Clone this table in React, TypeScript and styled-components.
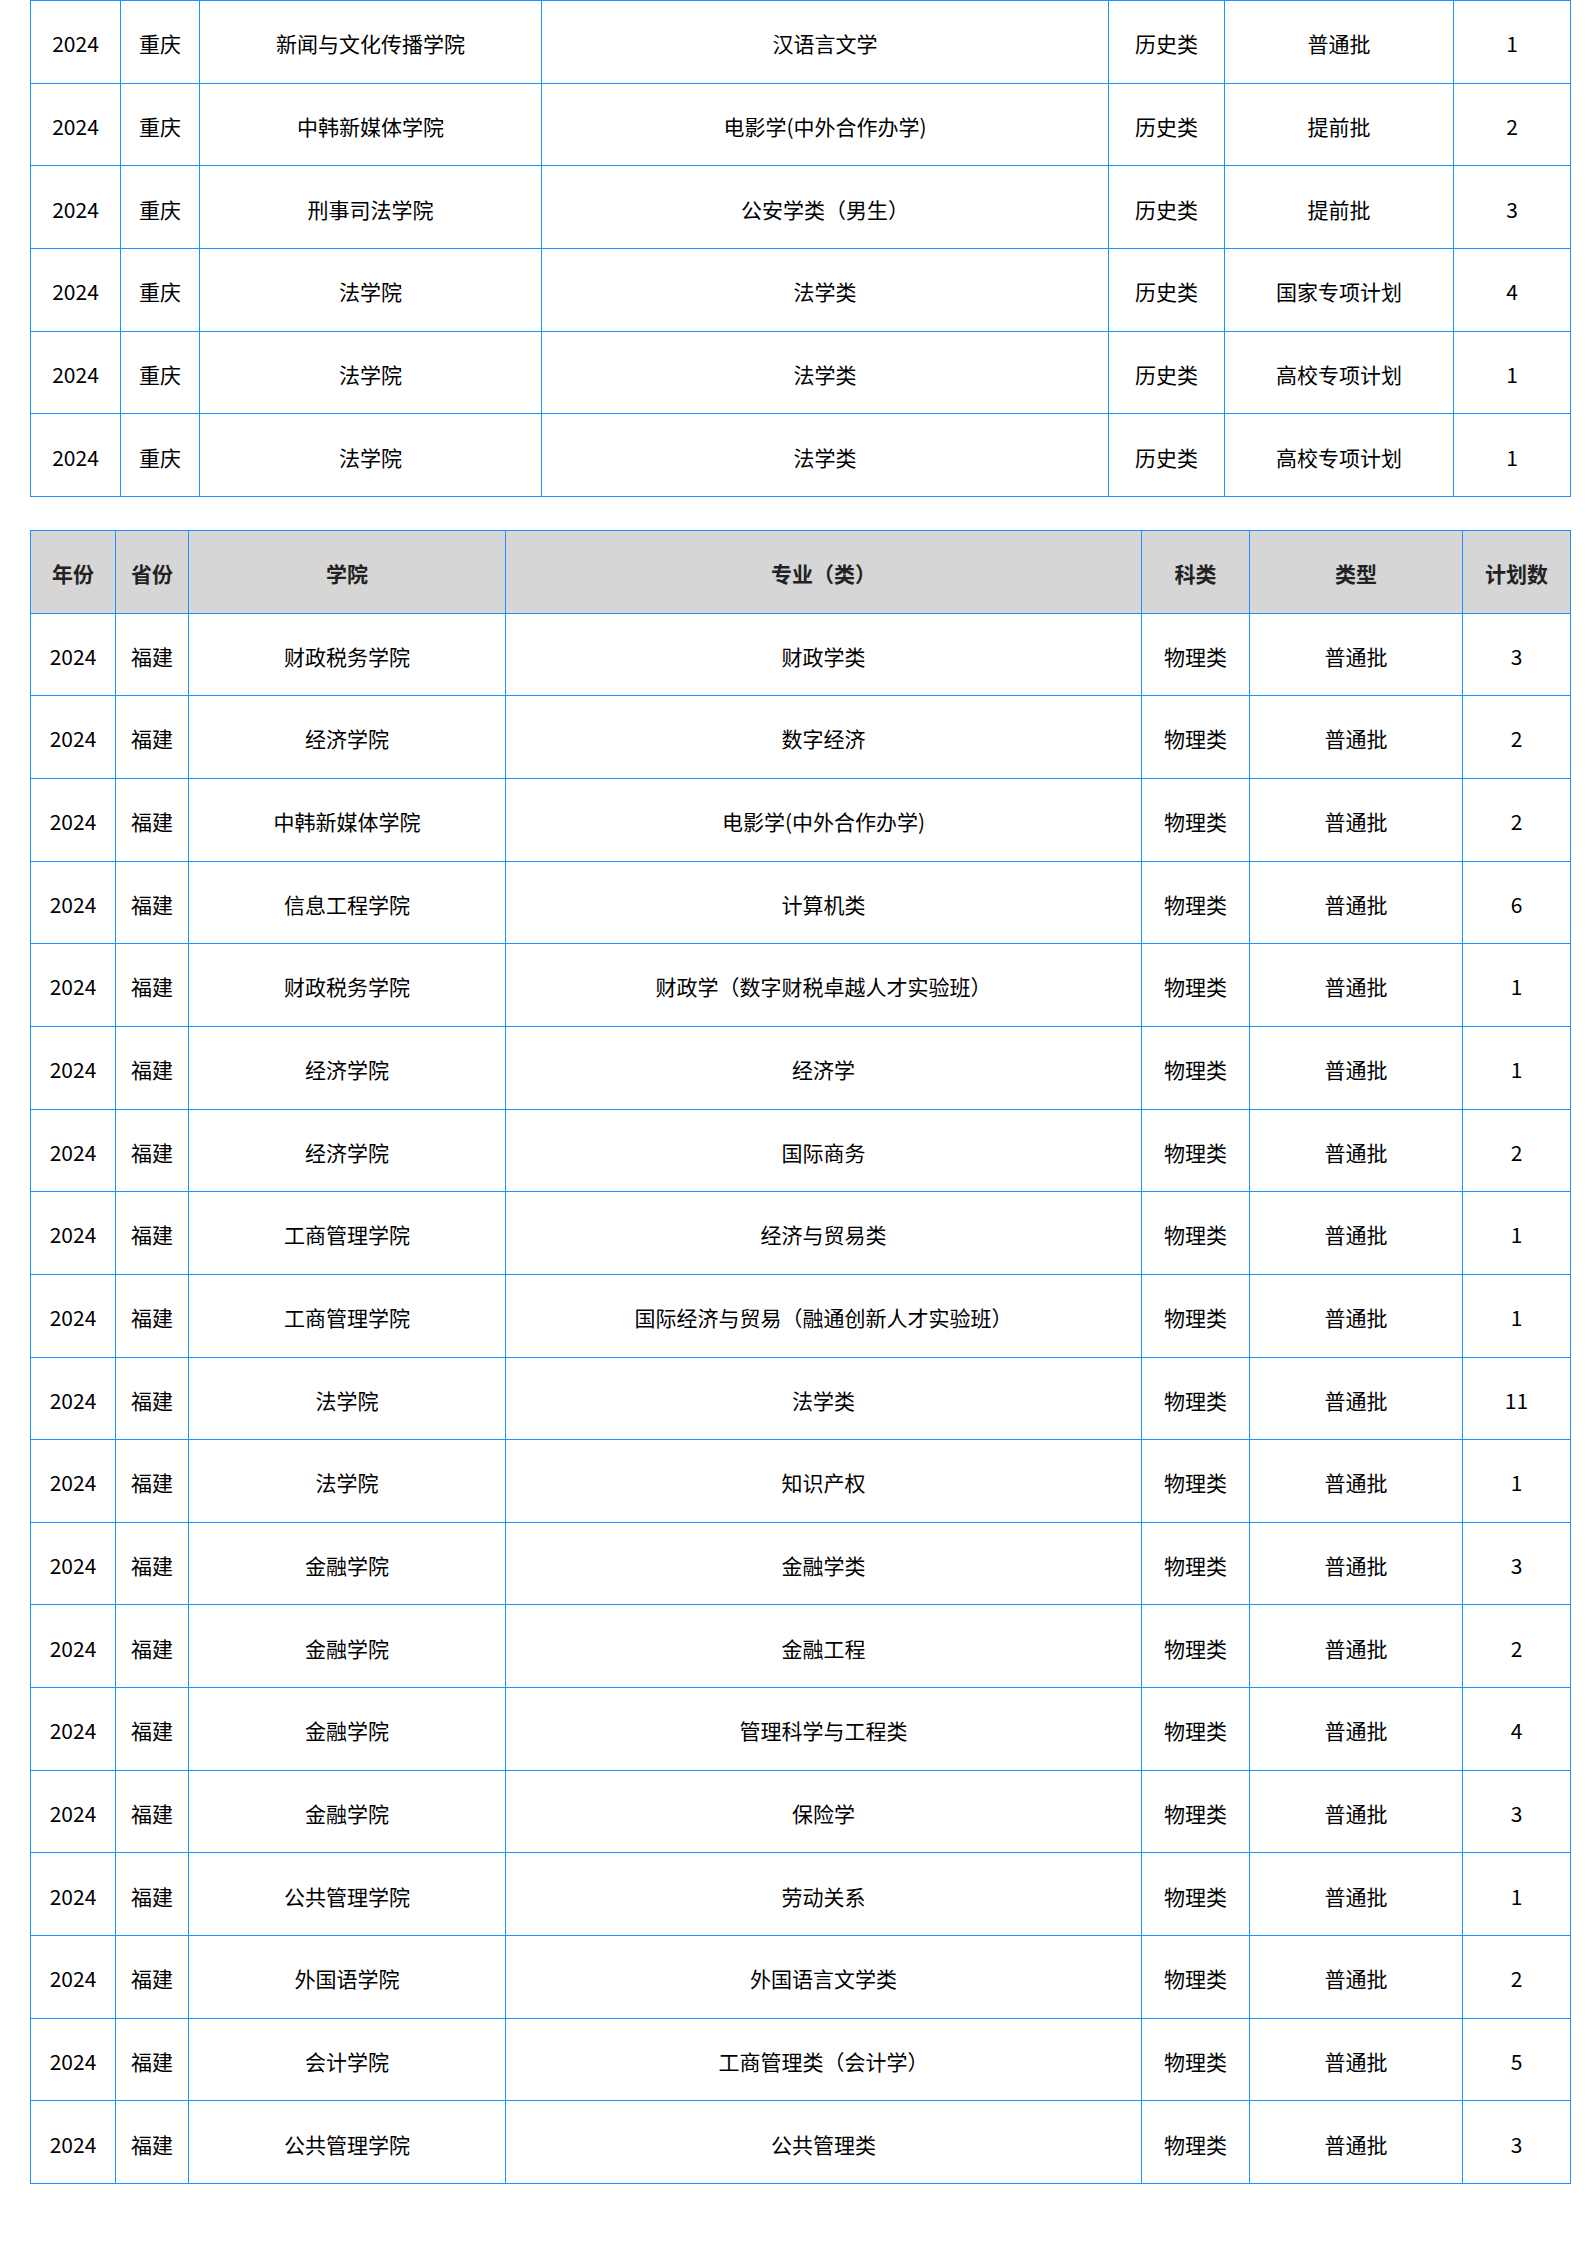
import React from "react";
import styled, { createGlobalStyle } from "styled-components";

const Global = createGlobalStyle`
  html, body { margin: 0; padding: 0; background: #fff; }
  body { font-family: "Microsoft YaHei", "Noto Sans CJK SC", "Noto Sans", sans-serif; }
`;

const Page = styled.div`
  padding: 0 0 0 30px;
  display: flex;
  flex-direction: column;
  gap: 33px;
  min-height: 2245px;
  box-sizing: border-box;
`;

const Table = styled.table`
  width: 1541px;
  table-layout: fixed;
  border-collapse: collapse;
  font-size: 21px;
  color: #000;
`;

const Row = styled.tr`
  height: 82.67px;
`;

const Cell = styled.td`
  border: 1px solid #1e90ff;
  text-align: center;
  vertical-align: middle;
  padding: 4px 0 0;
  line-height: 1.2;
  white-space: nowrap;
`;

const HeadCell = styled.th`
  border: 1px solid #1e90ff;
  background: #d6d6d6;
  text-align: center;
  vertical-align: middle;
  padding: 4px 0 0;
  font-weight: 700;
  color: #222;
  line-height: 1.2;
  white-space: nowrap;
`;

type R = [string, string, string, string, string, string, string];

const top: R[] = [
  ["2024", "重庆", "新闻与文化传播学院", "汉语言文学", "历史类", "普通批", "1"],
  ["2024", "重庆", "中韩新媒体学院", "电影学(中外合作办学)", "历史类", "提前批", "2"],
  ["2024", "重庆", "刑事司法学院", "公安学类（男生）", "历史类", "提前批", "3"],
  ["2024", "重庆", "法学院", "法学类", "历史类", "国家专项计划", "4"],
  ["2024", "重庆", "法学院", "法学类", "历史类", "高校专项计划", "1"],
  ["2024", "重庆", "法学院", "法学类", "历史类", "高校专项计划", "1"],
];

const fj: [string, string, string][] = [
  ["财政税务学院", "财政学类", "3"],
  ["经济学院", "数字经济", "2"],
  ["中韩新媒体学院", "电影学(中外合作办学)", "2"],
  ["信息工程学院", "计算机类", "6"],
  ["财政税务学院", "财政学（数字财税卓越人才实验班）", "1"],
  ["经济学院", "经济学", "1"],
  ["经济学院", "国际商务", "2"],
  ["工商管理学院", "经济与贸易类", "1"],
  ["工商管理学院", "国际经济与贸易（融通创新人才实验班）", "1"],
  ["法学院", "法学类", "11"],
  ["法学院", "知识产权", "1"],
  ["金融学院", "金融学类", "3"],
  ["金融学院", "金融工程", "2"],
  ["金融学院", "管理科学与工程类", "4"],
  ["金融学院", "保险学", "3"],
  ["公共管理学院", "劳动关系", "1"],
  ["外国语学院", "外国语言文学类", "2"],
  ["会计学院", "工商管理类（会计学）", "5"],
  ["公共管理学院", "公共管理类", "3"],
];

const bottom: R[] = fj.map(([a, b, c]) => ["2024", "福建", a, b, "物理类", "普通批", c]);

const topCols = [90, 79, 342, 567, 116, 229, 117];
const botCols = [85, 73, 317, 636, 108, 213, 108];

const Cols: React.FC<{ w: number[] }> = ({ w }) => (
  <colgroup>
    {w.map((x, i) => (
      <col key={i} style={{ width: x }} />
    ))}
  </colgroup>
);

const Body: React.FC<{ rows: R[] }> = ({ rows }) => (
  <tbody>
    {rows.map((r, i) => (
      <Row key={i}>
        {r.map((c, j) => (
          <Cell key={j}>{c}</Cell>
        ))}
      </Row>
    ))}
  </tbody>
);

export default function App() {
  return (
    <>
      <Global />
      <Page>
        <Table>
          <Cols w={topCols} />
          <Body rows={top} />
        </Table>
        <Table>
          <Cols w={botCols} />
          <thead>
            <Row>
              {["年份", "省份", "学院", "专业（类）", "科类", "类型", "计划数"].map((h) => (
                <HeadCell key={h}>{h}</HeadCell>
              ))}
            </Row>
          </thead>
          <Body rows={bottom} />
        </Table>
      </Page>
    </>
  );
}
